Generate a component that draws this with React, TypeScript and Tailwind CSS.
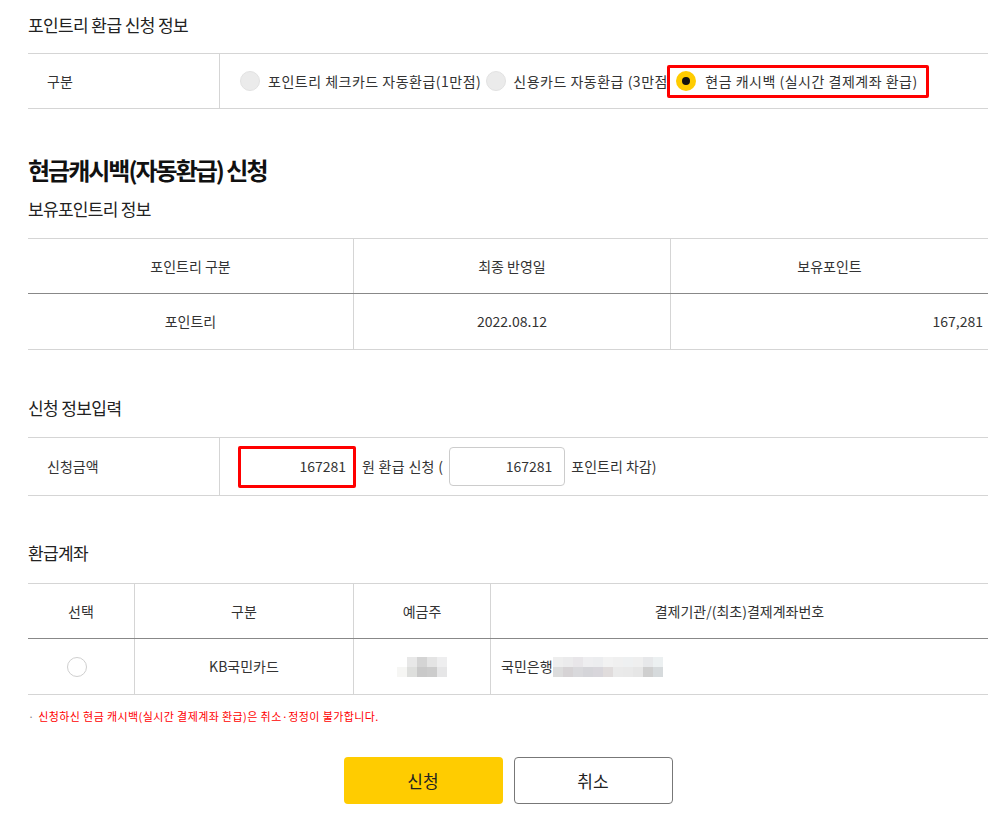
import React from "react";

const font = {
  fontFamily: '"Noto Sans CJK KR", "Noto Sans", sans-serif',
};

function Pixelated({ cols, rows, shades }: { cols: number; rows: number; shades: string[] }) {
  return (
    <div
      className="grid"
      style={{ gridTemplateColumns: `repeat(${cols}, 10px)`, gridTemplateRows: `repeat(${rows}, 10px)` }}
    >
      {shades.map((c, i) => (
        <div key={i} style={{ background: c }} />
      ))}
    </div>
  );
}

export default function App() {
  const nameShades = ["#ffffff", "#e8e8e8", "#d4d4d4", "#e4e4e4", "#eeeeef", "#f6f6f4", "#dedfdd", "#c9c9c9", "#cccccc", "#e6e6e7"];
  const accShades = [
    "#eeeeee", "#ebebec", "#e8e6e9", "#eeeef0", "#ecedef", "#f2f2f2", "#f0f0f0", "#eef0f1", "#efefef", "#e7e8ea", "#ecf0f1",
    "#dcdcdc", "#d6d3d5", "#d9d9dc", "#d5d5d9", "#d8d6db", "#e0dcdc", "#eaeaea", "#e9e9e9", "#e6e6e6", "#cfcfcf", "#d6dadc",
  ];
  return (
    <div className="w-[997px] bg-white text-[#333] pl-[28px] pr-[9px] pb-[12px]" style={font}>
      {/* 포인트리 환급 신청 정보 */}
      <div className="pt-[13px] text-[17px] leading-[24px] text-[#222] tracking-[-0.6px]">포인트리 환급 신청 정보</div>
      <div className="mt-[16px] flex h-[56px] border-y border-[#d5d5d5] text-[14px]">
        <div className="w-[192px] shrink-0 border-r border-[#d5d5d5] flex items-center pl-[19px]">구분</div>
        <div className="flex items-center pl-[20px] whitespace-nowrap tracking-[0.5px]">
          <div className="flex items-center">
            <span className="w-[20px] h-[20px] rounded-full bg-[#ebebeb] border border-[#e2e2e2]" />
            <span className="ml-[8px]">포인트리 체크카드 자동환급(1만점)</span>
          </div>
          <div className="flex items-center ml-[5px] w-[181px] shrink-0 overflow-hidden">
            <span className="w-[20px] h-[20px] shrink-0 rounded-full bg-[#ebebeb] border border-[#e2e2e2]" />
            <span className="ml-[7px]">신용카드 자동환급 (3만점)</span>
          </div>
          <div className="flex items-center h-[33px] w-[262px] shrink-0 border-[3px] border-[#ff0000] rounded-[2px] pl-[6px]">
            <span className="w-[20px] h-[20px] rounded-full bg-[#ffcc00] flex items-center justify-center">
              <span className="w-[8px] h-[8px] rounded-full bg-[#111]" />
            </span>
            <span className="ml-[9px]">현금 캐시백 (실시간 결제계좌 환급)</span>
          </div>
        </div>
      </div>

      {/* 현금캐시백 */}
      <div className="mt-[45px] text-[24px] leading-[32px] font-bold text-[#111] tracking-[-2px]">현금캐시백(자동환급) 신청</div>
      <div className="mt-[11px] text-[17px] leading-[24px] text-[#222] tracking-[-0.7px]">보유포인트리 정보</div>

      <div className="mt-[17px] text-[14px]">
        <div className="grid grid-cols-[326px_317px_317px] h-[56px] border-y border-t-[#d5d5d5] border-b-[#888]">
          <div className="flex items-center justify-center border-r border-[#d5d5d5]">포인트리 구분</div>
          <div className="flex items-center justify-center border-r border-[#d5d5d5]">최종 반영일</div>
          <div className="flex items-center justify-center">보유포인트</div>
        </div>
        <div className="grid grid-cols-[326px_317px_317px] h-[56px] border-b border-[#d5d5d5]">
          <div className="flex items-center justify-center border-r border-[#d5d5d5]">포인트리</div>
          <div className="flex items-center justify-center border-r border-[#d5d5d5]">2022.08.12</div>
          <div className="flex items-center justify-end pr-[5px]">167,281</div>
        </div>
      </div>

      {/* 신청 정보입력 */}
      <div className="mt-[46px] text-[17px] leading-[24px] text-[#222] tracking-[-0.6px]">신청 정보입력</div>
      <div className="mt-[17px] flex h-[59px] border-y border-[#d5d5d5] text-[14px]">
        <div className="w-[192px] shrink-0 border-r border-[#d5d5d5] flex items-center pl-[19px]">신청금액</div>
        <div className="flex items-center pl-[18px] whitespace-nowrap">
          <div className="w-[118px] h-[42px] border-[3px] border-[#ff0000] rounded-[2px] flex items-center justify-end pr-[7px]">167281</div>
          <span className="ml-[6px] tracking-[0.3px]">원 환급 신청 (</span>
          <div className="ml-[6px] w-[116px] h-[39px] border border-[#ccc] rounded-[4px] flex items-center justify-end pr-[12px]">167281</div>
          <span className="ml-[6px]">포인트리 차감)</span>
        </div>
      </div>

      {/* 환급계좌 */}
      <div className="mt-[45px] text-[17px] leading-[24px] text-[#222] tracking-[-0.6px]">환급계좌</div>
      <div className="mt-[18px] text-[14px]">
        <div className="grid grid-cols-[107px_219px_137px_497px] h-[56px] border-y border-t-[#d5d5d5] border-b-[#888]">
          <div className="flex items-center justify-center border-r border-[#d5d5d5]">선택</div>
          <div className="flex items-center justify-center border-r border-[#d5d5d5]">구분</div>
          <div className="flex items-center justify-center border-r border-[#d5d5d5]">예금주</div>
          <div className="flex items-center justify-center">결제기관/(최초)결제계좌번호</div>
        </div>
        <div className="grid grid-cols-[107px_219px_137px_497px] h-[56px] border-b border-[#d5d5d5]">
          <div className="flex items-center justify-center border-r border-[#d5d5d5]">
            <span className="w-[20px] h-[20px] mr-[8px] rounded-full border border-[#cfcfcf] bg-white" />
          </div>
          <div className="flex items-center justify-center border-r border-[#d5d5d5]">KB국민카드</div>
          <div className="flex items-center justify-center border-r border-[#d5d5d5]">
            <Pixelated cols={5} rows={2} shades={nameShades} />
          </div>
          <div className="flex items-center pl-[10px]">
            <span>국민은행</span>
            <Pixelated cols={11} rows={2} shades={accShades} />
          </div>
        </div>
      </div>

      <div className="mt-[13px] text-[11px] leading-[16px] flex">
        <span className="text-[#888] mr-[4px]">·</span>
        <span className="text-[#ff0000] tracking-[0.4px]">신청하신 현금 캐시백(실시간 결제계좌 환급)은 취소·정정이 불가합니다.</span>
      </div>

      <div className="mt-[33px] w-[960px] flex justify-center gap-[11px]">
        <button className="w-[159px] h-[47px] rounded-[4px] bg-[#ffcc00] text-[17px] text-[#222]">신청</button>
        <button className="w-[159px] h-[47px] rounded-[4px] bg-white border border-[#777] text-[17px] text-[#222]">취소</button>
      </div>
    </div>
  );
}
